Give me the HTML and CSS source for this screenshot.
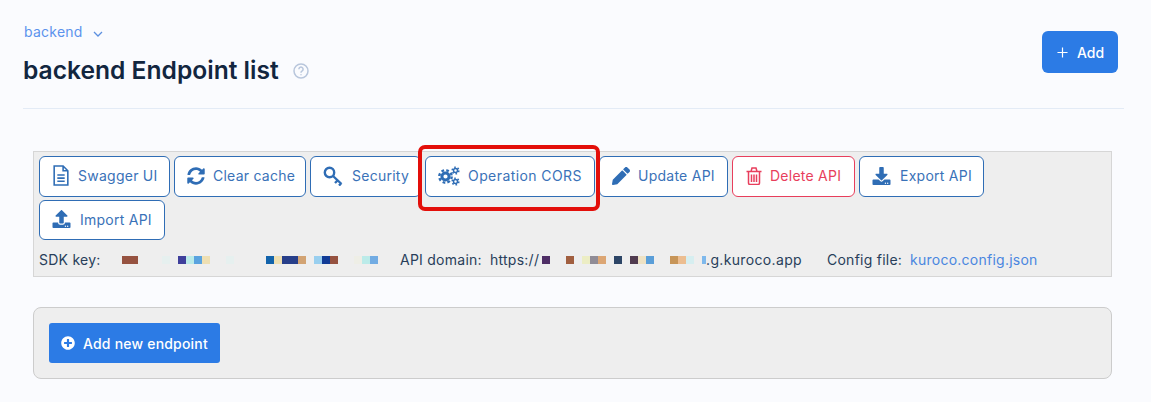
FILE: index.html
```html
<!DOCTYPE html>
<html lang="en">
<head>
<meta charset="utf-8">
<title>backend Endpoint list</title>
<link rel="stylesheet" href="styles.css">
</head>
<body>
<header class="page-head">
  <div class="head-main">
    <div class="crumb"><a class="crumb-link">backend</a>
      <svg class="chev" viewBox="0 0 10 6"><path d="M1 1l4 4 4-4"/></svg>
    </div>
    <h1 class="title">backend Endpoint list
      <svg class="help" viewBox="0 0 16 16"><circle cx="8" cy="8" r="7"/><path d="M5.900 6.200a2.100 2.100 0 1 1 3.300 1.700c-.8.5-1.200.9-1.200 1.800"/><path d="M8 11.200v1"/></svg>
    </h1>
  </div>
  <button class="btn-primary btn-add"><svg class="plus" viewBox="0 0 12 12"><path d="M6 .5v11M.5 6h11"/></svg>Add</button>
</header>

<section class="panel">
  <div class="actions">
    <a class="act act-1"><svg class="ico ico-doc" viewBox="0 0 16 20"><path class="line" d="M1.500 1h8.500l4.500 4.500v13.500h-13z M10 1v4.500h4.500 M4.500 9.500h7 M4.500 12.500h7 M4.500 15.500h7"/></svg>Swagger UI</a>
    <a class="act act-2"><svg class="ico" viewBox="0 0 512 512"><path d="M370.720 133.280C339.458 104.008 298.888 87.962 255.848 88c-77.458.068-144.328 53.178-162.791 126.850-1.344 5.363-6.122 9.150-11.651 9.150H24.103c-7.498 0-13.194-6.807-11.807-14.176C33.933 94.924 134.813 8 256 8c66.448 0 126.791 26.136 171.315 68.685L463.030 40.970C478.149 25.851 504 36.559 504 57.941V192c0 13.255-10.745 24-24 24H345.941c-21.382 0-32.090-25.851-16.971-40.971l41.750-41.749zM32 296h134.059c21.382 0 32.090 25.851 16.971 40.971l-41.750 41.750c31.262 29.273 71.835 45.319 114.876 45.280 77.418-.07 144.315-53.144 162.787-126.849 1.344-5.363 6.122-9.150 11.651-9.150h57.304c7.498 0 13.194 6.807 11.807 14.176C478.067 417.076 377.187 504 256 504c-66.448 0-126.791-26.136-171.315-68.685L48.970 471.030C33.851 486.149 8 475.441 8 454.059V320c0-13.255 10.745-24 24-24z"/></svg>Clear cache</a>
    <a class="act act-3"><svg class="ico ico-key" viewBox="0 0 20 20"><circle class="thick" cx="6.500" cy="6.500" r="4.700"/><path class="thick" d="M10 10l8.500 8M14.500 14.500l-2.500 2.500M18 17.500l-2 2"/></svg>Security</a>
    <a class="act act-4"><svg class="ico ico-cogs" viewBox="0 0 22 20"><circle class="teeth" cx="7.500" cy="10.500" r="6.200"/><circle class="hub" cx="7.500" cy="10.500" r="3.600"/><circle class="teeth-s" cx="17.500" cy="4.500" r="3.300"/><circle class="hub-s" cx="17.500" cy="4.500" r="2"/><circle class="teeth-s" cx="17.500" cy="15.500" r="3.300"/><circle class="hub-s" cx="17.500" cy="15.500" r="2"/></svg>Operation CORS</a>
    <a class="act act-5"><svg class="ico" viewBox="0 0 512 512"><path d="M497.900 142.100l-46.100 46.100c-4.700 4.700-12.300 4.700-17 0l-111-111c-4.700-4.700-4.700-12.300 0-17l46.100-46.100c18.700-18.700 49.100-18.700 67.900 0l60.100 60.100c18.800 18.700 18.800 49.100 0 67.900zM284.200 99.800L21.600 362.400.4 483.900c-2.900 16.400 11.400 30.600 27.800 27.800l121.500-21.300 262.600-262.600c4.700-4.700 4.700-12.300 0-17l-111-111c-4.800-4.700-12.400-4.700-17.100 0z"/></svg>Update API</a>
    <a class="act act-6 danger"><svg class="ico" viewBox="0 0 16 18"><path class="line" d="M.5 4.500h15 M2.500 4.500v11.500a1.500 1.500 0 0 0 1.500 1.500h8a1.500 1.500 0 0 0 1.500-1.500V4.500 M5 4.500l1-3.500h4l1 3.500 M5.500 7.500v7.500 M8 7.500v7.500 M10.500 7.500v7.500"/></svg>Delete API</a>
    <a class="act act-7"><svg class="ico ico-tray" viewBox="0 0 512 512"><path d="M216 0h80c13.300 0 24 10.700 24 24v168h87.700c17.800 0 26.700 21.500 14.100 34.100L269.700 378.300c-7.500 7.500-19.800 7.500-27.300 0L90.100 226.100c-12.600-12.600-3.700-34.100 14.100-34.100H192V24c0-13.300 10.700-24 24-24zm296 376v112c0 13.300-10.700 24-24 24H24c-13.300 0-24-10.700-24-24V376c0-13.300 10.700-24 24-24h146.700l49 49c20.100 20.100 52.500 20.100 72.600 0l49-49H488c13.300 0 24 10.700 24 24zm-124 88c0-11-9-20-20-20s-20 9-20 20 9 20 20 20 20-9 20-20zm64 0c0-11-9-20-20-20s-20 9-20 20 9 20 20 20 20-9 20-20z"/></svg>Export API</a>
    <a class="act act-8"><svg class="ico ico-tray" viewBox="0 0 512 512"><path d="M296 384h-80c-13.300 0-24-10.700-24-24V192h-87.700c-17.800 0-26.700-21.500-14.100-34.100L242.300 5.700c7.500-7.500 19.800-7.500 27.300 0l152.200 152.200c12.600 12.600 3.700 34.100-14.100 34.100H320v168c0 13.300-10.700 24-24 24zm216-8v112c0 13.300-10.700 24-24 24H24c-13.300 0-24-10.700-24-24V376c0-13.300 10.700-24 24-24h136v8c0 30.900 25.100 56 56 56h80c30.900 0 56-25.100 56-56v-8h136c13.300 0 24 10.700 24 24zm-124 88c0-11-9-20-20-20s-20 9-20 20 9 20 20 20 20-9 20-20zm64 0c0-11-9-20-20-20s-20 9-20 20 9 20 20 20 20-9 20-20z"/></svg>Import API</a>
  </div>
  <div class="meta">
    <span class="label label-sdk">SDK key:</span>
    <span class="mask mask-key">
      <i class="c-brown w16"></i><i class="w24"></i><i class="c-mist"></i><i></i><i class="c-indigo"></i><i class="c-cyan"></i><i class="c-blue"></i><i class="c-cream"></i><i class="w16"></i><i class="c-mist"></i><i class="w32"></i><i class="c-royal"></i><i class="c-cream"></i><i class="c-navy w16"></i><i class="c-tan"></i><i></i><i class="c-sky"></i><i class="c-deep"></i><i class="c-brown"></i><i class="w16"></i><i class="c-off"></i><i class="c-cyan"></i><i class="c-blue2"></i>
    </span>
    <span class="label label-domain">API domain:</span>
    <span class="value value-scheme">https://</span>
    <span class="mask mask-domain">
      <i class="c-plum"></i><i class="w16"></i><i class="c-rust"></i><i></i><i class="c-lime"></i><i class="c-grey"></i><i class="c-peach"></i><i></i><i class="c-slate"></i><i></i><i class="c-wine"></i><i class="c-cream2"></i><i class="c-blue3"></i><i class="w16"></i><i class="c-ochre"></i><i class="c-apricot"></i><i class="c-ice"></i><i></i><i class="c-sky2 w4"></i>
    </span>
    <span class="value value-host">.g.kuroco.app</span>
    <span class="label label-config">Config file:</span>
    <a class="config-link">kuroco.config.json</a>
  </div>
</section>

<section class="card">
  <button class="btn-primary btn-new"><svg class="plus-circle" viewBox="0 0 512 512"><path d="M256 8C119 8 8 119 8 256s111 248 248 248 248-111 248-248S393 8 256 8zm144 276c0 6.600-5.400 12-12 12h-92v92c0 6.600-5.400 12-12 12h-56c-6.600 0-12-5.400-12-12v-92h-92c-6.600 0-12-5.400-12-12v-56c0-6.600 5.400-12 12-12h92v-92c0-6.600 5.400-12 12-12h56c6.600 0 12 5.400 12 12v92h92c6.600 0 12 5.400 12 12v56z"/></svg>Add new endpoint</button>
</section>

<div class="highlight"></div>
</body>
</html>
```

FILE: styles.css
```css
* { box-sizing: border-box; }
html, body { height: 100%; }
body {
  margin: 0;
  padding: 0 27px 0 23px;
  background: #fafbfe;
  font-family: "Inter", "Liberation Sans", sans-serif;
  color: #12263f;
  overflow: hidden;
  position: relative;
}
.page-head {
  height: 109px;
  padding-top: 24px;
  border-bottom: 1px solid #e3ebf6;
  display: flex;
  justify-content: space-between;
  align-items: flex-start;
}
.crumb { display: flex; align-items: center; height: 16px; font-size: 14px; line-height: 16px; letter-spacing: .25px; padding-left: 1px; }
.crumb-link { color: #5c93ed; }
.chev { width: 10px; height: 6px; margin-left: 10px; margin-top: 3px; fill: none; stroke: #5c8fe0; stroke-width: 1.300; }
.title { margin: 14px 0 0; font-size: 24.600px; line-height: 32px; font-weight: 600; color: #12263f; display: flex; align-items: center; }
.help { width: 16px; height: 16px; margin-left: 14px; margin-top: 2px; fill: none; stroke: #b8c6dc; stroke-width: 1.500; }
.btn-primary { border: 0; background: #2c7be5; color: #fff; font-family: inherit; display: inline-flex; align-items: center; }
.btn-add { width: 76px; height: 42px; margin: 7px 6px 0 0; border-radius: 6px; font-size: 14px; font-weight: 500; padding: 0 0 0 15px; }
.plus { width: 11px; height: 11px; margin-right: 9px; fill: none; stroke: #fff; stroke-width: 1.300; }

.panel {
  margin: 42px 12px 0 10px;
  height: 126px;
  background: #eee;
  border: 1px solid #d6d6d6;
  padding: 4px 5px 0;
}
.actions { display: flex; flex-wrap: wrap; gap: 3px 4px; }
.act {
  height: 41px;
  display: inline-flex;
  align-items: center;
  background: #fff;
  border: 1px solid #2f6db5;
  border-radius: 6px;
  color: #3a72b8;
  font-size: 14px;
  letter-spacing: .25px;
  white-space: nowrap;
  padding: 0 0 2px 12px;
}
.act-1 { width: 131px; }
.act-2 { width: 132px; }
.act-3 { width: 111px; }
.act-4 { width: 170px; letter-spacing: .42px; }
.act-5 { width: 129px; }
.act-6 { width: 123px; }
.act-7 { width: 125px; }
.act-8 { width: 126px; height: 40px; }
.danger { border-color: #e83e5c; color: #e83e5c; }
.ico { width: 18px; height: 18px; margin-right: 8px; fill: #2f6db5; flex: none; }
.act-6 .ico { margin-right: 7px; }
.ico-doc { height: 21px; }
.ico-key { width: 20px; height: 20px; margin-right: 9px; }
.ico-tray { width: 19px; margin-right: 9px; }
.ico-cogs { width: 22px; height: 20px; margin-right: 8px; }
.danger .ico { fill: #e83e5c; }
.line { fill: none; stroke: #2f6db5; stroke-width: 1.500; }
.danger .line { stroke: #e83e5c; }
.thick { fill: none; stroke: #2f6db5; stroke-width: 2.400; }
.teeth { fill: none; stroke: #2f6db5; stroke-width: 2.400; stroke-dasharray: 2.700 2.170; }
.hub { fill: none; stroke: #2f6db5; stroke-width: 3; }
.teeth-s { fill: none; stroke: #2f6db5; stroke-width: 1.600; stroke-dasharray: 1.600 1.860; }
.hub-s { fill: none; stroke: #2f6db5; stroke-width: 1.500; }

.meta { display: flex; align-items: center; height: 16px; margin-top: 12px; font-size: 14px; line-height: 16px; letter-spacing: .25px; color: #283e5a; white-space: nowrap; }
.label-sdk { width: 83px; }
.label-domain { margin-left: 22px; width: 90px; }
.value-scheme { width: 52px; }
.value-host { width: 95px; letter-spacing: .35px; }
.label-config { margin-left: 26px; width: 83px; }
.config-link { color: #4a86e0; }
.mask { display: flex; height: 8px; }
.mask i { display: block; width: 8px; height: 8px; }
.mask i.w4 { width: 4px; }
.mask i.w16 { width: 16px; }
.mask i.w24 { width: 24px; }
.mask i.w32 { width: 32px; }
.c-brown { background: #965240; }
.c-mist { background: #e6f0ef; }
.c-indigo { background: #3f3f9b; }
.c-cyan { background: #bbebe9; }
.c-blue { background: #5aa3df; }
.c-cream { background: #eedfb2; }
.c-royal { background: #1263ab; }
.c-navy { background: #283f8a; }
.c-tan { background: #d2a373; }
.c-sky { background: #99cfef; }
.c-deep { background: #113b96; }
.c-off { background: #eeeee6; }
.c-blue2 { background: #72ace3; }
.c-plum { background: #4f2e66; }
.c-rust { background: #a15f40; }
.c-lime { background: #ecedc4; }
.c-grey { background: #908c96; }
.c-peach { background: #dca674; }
.c-slate { background: #2c4566; }
.c-wine { background: #513c50; }
.c-cream2 { background: #eee2c4; }
.c-blue3 { background: #5a9ed8; }
.c-ochre { background: #c79558; }
.c-apricot { background: #ecbd90; }
.c-ice { background: #d6eef0; }
.c-sky2 { background: #7fb9ec; }

.card {
  margin: 30px 12px 0 10px;
  height: 72px;
  background: #eee;
  border: 1px solid #ccc;
  border-radius: 8px;
  padding: 15px;
}
.btn-new { width: 171px; height: 40px; border-radius: 3px; font-size: 14px; font-weight: 500; letter-spacing: .2px; padding: 0 0 0 12px; }
.plus-circle { width: 14px; height: 14px; margin-right: 8px; fill: #fff; }

.highlight {
  position: absolute;
  left: 418px;
  top: 145px;
  width: 182px;
  height: 66px;
  border: 4px solid #e30f0a;
  border-radius: 7px;
  pointer-events: none;
}
```
